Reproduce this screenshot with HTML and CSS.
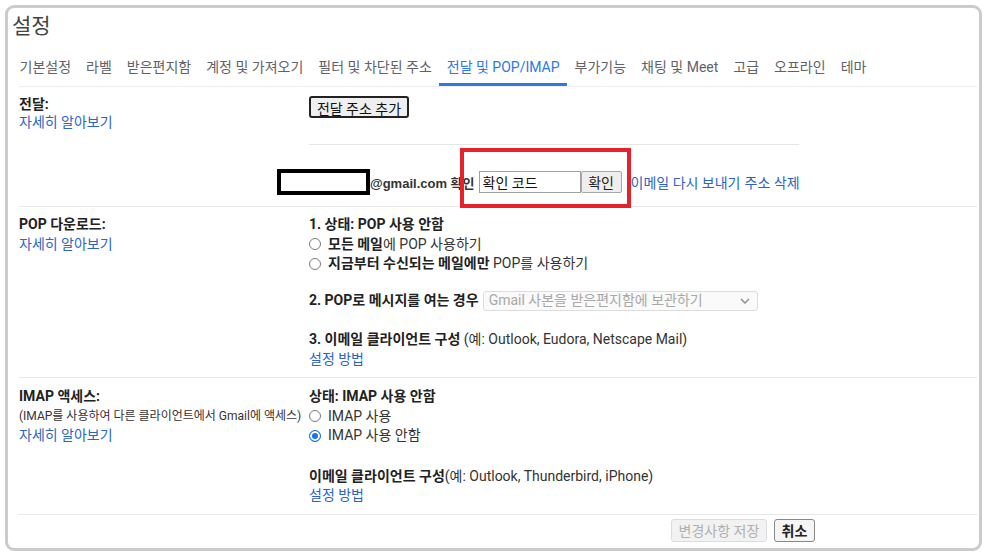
FILE: index.html
```html
<!DOCTYPE html>
<html lang="ko">
<head>
    <meta charset="UTF-8">
    <title>설정 - 전달 및 POP/IMAP</title>
    <link rel="stylesheet" href="styles.css">
</head>
<body>
    <div class="frame">
        <div class="title">설정</div>

        <div class="tabs">
            <div class="tab-list">
                <span class="tab">기본설정</span>
                <span class="tab">라벨</span>
                <span class="tab">받은편지함</span>
                <span class="tab">계정 및 가져오기</span>
                <span class="tab">필터 및 차단된 주소</span>
                <span class="tab active">전달 및 POP/IMAP</span>
                <span class="tab">부가기능</span>
                <span class="tab">채팅 및 Meet</span>
                <span class="tab">고급</span>
                <span class="tab">오프라인</span>
                <span class="tab">테마</span>
            </div>
        </div>

        <!-- 전달 -->
        <div class="section forward">
            <div class="label">
                <div class="label-title">전달:</div>
                <a class="link" href="#">자세히 알아보기</a>
            </div>
            <div class="content">
                <button class="btn btn-focus">전달 주소 추가</button>
                <div class="divider"></div>
                <div class="verify">
                    <span class="redact"></span>
                    <span class="verify-text">@gmail.com 확인</span>
                    <input class="code" type="text" value="확인 코드">
                    <button class="btn btn-confirm">확인</button>
                    <a class="link resend" href="#">이메일 다시 보내기</a>
                    <a class="link" href="#">주소 삭제</a>
                    <span class="highlight"></span>
                </div>
            </div>
        </div>

        <!-- POP -->
        <div class="section pop">
            <div class="label">
                <div class="label-title">POP 다운로드:</div>
                <a class="link" href="#">자세히 알아보기</a>
            </div>
            <div class="content">
                <div class="line"><b>1. 상태: POP 사용 안함</b></div>
                <div class="line radio-row"><span class="radio"></span><span><b>모든 메일</b>에 POP 사용하기</span></div>
                <div class="line radio-row"><span class="radio"></span><span><b>지금부터 수신되는 메일에만</b> POP를 사용하기</span></div>
                <div class="line select-row">
                    <b>2. POP로 메시지를 여는 경우</b>
                    <div class="select">
                        <span>Gmail 사본을 받은편지함에 보관하기</span>
                        <svg width="10" height="6" viewBox="0 0 10 6"><polyline points="1,1 5,5 9,1" fill="none" stroke="#888" stroke-width="1.4"/></svg>
                    </div>
                </div>
                <div class="line step"><b>3. 이메일 클라이언트 구성</b> (예: Outlook, Eudora, Netscape Mail)</div>
                <div class="line"><a class="link" href="#">설정 방법</a></div>
            </div>
        </div>

        <!-- IMAP -->
        <div class="section imap">
            <div class="label">
                <div class="label-title">IMAP 액세스:</div>
                <div class="note">(IMAP를 사용하여 다른 클라이언트에서 Gmail에 액세스)</div>
                <a class="link" href="#">자세히 알아보기</a>
            </div>
            <div class="content">
                <div class="line"><b>상태: IMAP 사용 안함</b></div>
                <div class="line radio-row"><span class="radio"></span><span>IMAP 사용</span></div>
                <div class="line radio-row"><span class="radio checked"></span><span>IMAP 사용 안함</span></div>
                <div class="line step"><b>이메일 클라이언트 구성</b>(예: Outlook, Thunderbird, iPhone)</div>
                <div class="line"><a class="link" href="#">설정 방법</a></div>
            </div>
        </div>

        <div class="footer">
            <button class="btn btn-disabled">변경사항 저장</button>
            <button class="btn btn-cancel">취소</button>
        </div>
    </div>
</body>
</html>
```

FILE: styles.css
```css
body {
    margin: 0;
    font-family: Roboto, "Noto Sans CJK KR", sans-serif;
    font-size: 14px;
    color: #222;
    background: #fff;
}
.frame {
    margin: 5px 8px 0 5px;
    height: 546px;
    box-sizing: border-box;
    border: 3px solid #cbcbcb;
    border-radius: 9px;
}
.title {
    padding: 5px 0 0 4px;
    font-size: 21px;
    line-height: 26px;
    color: #444;
}
.tabs {
    margin: 13px 2px 0 11px;
    border-bottom: 1px solid #eeeeee;
}
.tab-list {
    display: flex;
    margin-left: -7px;
}
.tab {
    padding: 0 7.5px;
    line-height: 31px;
    font-size: 14px;
    color: #5f6368;
    border-bottom: 3px solid transparent;
    white-space: nowrap;
}
.tab.active {
    color: #2a7ae0;
    border-bottom-color: #2a7ae0;
}
.link {
    color: #2b64c4;
    text-decoration: none;
}
.section {
    display: grid;
    grid-template-columns: 290px 1fr;
    margin: 0 2px 0 11px;
    padding: 8px 0;
    border-bottom: 1px solid #e8e8e8;
}
.label {
    line-height: 19.5px;
}
.label-title {
    font-weight: bold;
    color: #222;
}
.forward .label {
    line-height: 18px;
}
.note {
    font-size: 12px;
    color: #333;
    white-space: nowrap;
}
.line {
    line-height: 19.5px;
    color: #333;
}
.line b {
    color: #222;
}
.btn {
    font-family: inherit;
    font-size: 14px;
    box-sizing: border-box;
    height: 22px;
    padding: 0 6px;
    border-radius: 3px;
    cursor: pointer;
}
.btn-focus {
    margin-top: 1px;
    width: 100px;
    padding: 0;
    background: #efefef;
    border: 2px solid #222;
    color: #111;
}
.forward .content {
    padding-bottom: 5px;
}
.divider {
    margin-top: 26px;
    width: 490px;
    border-top: 1px solid #e6e6e6;
}
.verify {
    position: relative;
    display: flex;
    align-items: center;
    height: 22px;
    margin-top: 26px;
}
.redact {
    flex: none;
    margin-left: -32px;
    width: 93px;
    height: 26px;
    box-sizing: border-box;
    border: 4px solid #000;
    background: #fff;
}
.verify-text {
    font-family: "Liberation Sans", "Noto Sans CJK KR", sans-serif;
    font-size: 13px;
    font-weight: bold;
    color: #333;
    margin-right: 4px;
    white-space: nowrap;
}
.code {
    box-sizing: border-box;
    width: 102px;
    height: 22px;
    padding: 0 3px;
    border: 1px solid #a0a0a0;
    font-family: inherit;
    font-size: 14px;
    color: #111;
}
.btn-confirm {
    width: 41px;
    padding: 0;
    background: #eeeeee;
    border: 1px solid #a8a8a8;
    border-radius: 2px;
    color: #222;
}
.resend {
    margin-left: 9px;
    margin-right: 4px;
    white-space: nowrap;
}
.highlight {
    position: absolute;
    left: 151px;
    top: -23px;
    width: 171px;
    height: 60px;
    box-sizing: border-box;
    border: 4px solid #e8202a;
}
.radio-row {
    display: flex;
    align-items: center;
    gap: 7px;
}
.radio {
    flex: none;
    width: 12px;
    height: 12px;
    box-sizing: border-box;
    border: 1px solid #7a7a7a;
    border-radius: 50%;
    background: #fff;
}
.radio.checked {
    border: 1.5px solid #1a73e8;
    background: #1a73e8;
    box-shadow: inset 0 0 0 2px #fff;
}
.select-row {
    display: flex;
    align-items: center;
    gap: 4px;
    margin-top: 17.5px;
    height: 20px;
}
.select {
    display: flex;
    align-items: center;
    justify-content: space-between;
    width: 275px;
    height: 20px;
    box-sizing: border-box;
    padding: 0 7px 0 5px;
    border: 1px solid #dddddd;
    border-radius: 3px;
    background: #fafafa;
    color: #a8a8a8;
}
.pop .step {
    margin-top: 19px;
}
.imap {
    padding-top: 9px;
}
.imap .step {
    margin-top: 21px;
}
.footer {
    display: flex;
    gap: 7px;
    padding: 4px 0 0 663px;
}
.btn-disabled {
    height: 23px;
    width: 96px;
    padding: 0;
    background: #f2f2f2;
    border: 1px solid #dcdcdc;
    color: #b0b0b0;
}
.btn-cancel {
    height: 23px;
    width: 41px;
    padding: 0;
    background: #f5f5f5;
    border: 1px solid #888;
    color: #222;
    font-weight: bold;
}
```
